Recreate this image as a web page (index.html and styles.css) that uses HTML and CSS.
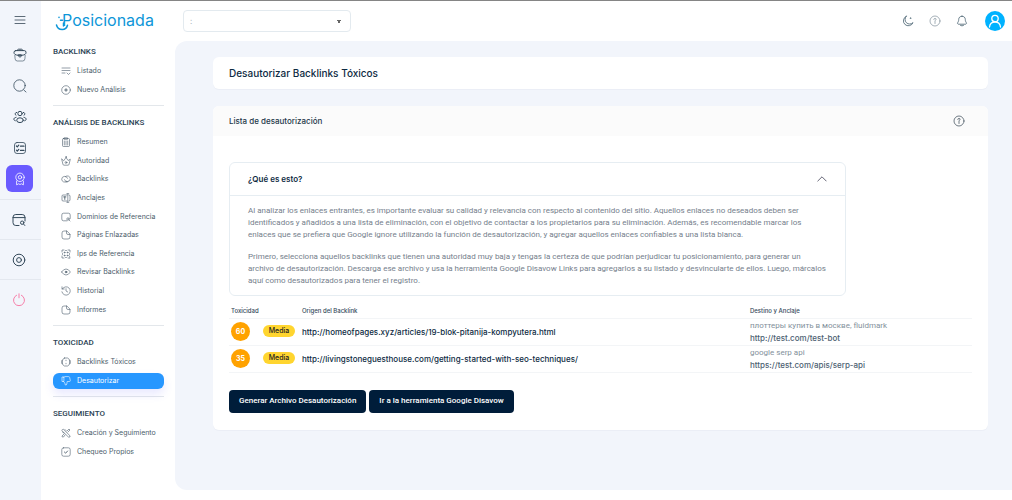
FILE: index.html
```html
<!DOCTYPE html>
<html lang="es">
<head>
<meta charset="utf-8">
<meta name="viewport" content="width=device-width, initial-scale=1">
<title>Posicionada - Desautorizar Backlinks</title>
<link rel="stylesheet" href="styles.css">
</head>
<body>
<div class="app">
  <nav class="rail" aria-label="Principal">
    <button class="rail-btn menu-btn" aria-label="Menú"><svg viewBox="0 0 14 14"><path d="M2 3.5h10M2 7h10M2 10.500h10"/></svg></button>
    <a class="rail-btn" href="#" aria-label="Proyectos"><svg viewBox="0 0 14 14"><path d="M4.200 2.600Q4.500 1.200 5.500 1.200h3q1 0 1.300 1.400M2.600 2.600h8.800q1.600 0 1.600 1.900Q13 7 8.600 7.300H5.400Q1 7 1 4.500 1 2.600 2.600 2.600z"/><path class="fine" d="M1.800 7.200l.3 3.600q.2 2.200 2.200 2.200h5.400q2 0 2.200-2.200l.3-3.600"/><path d="M5.600 6.800h2.800v1.400L7 9.200l-1.400-1z"/></svg></a>
    <a class="rail-btn" href="#" aria-label="Buscar"><svg class="thin" viewBox="0 0 14 14"><circle cx="6.500" cy="6.500" r="5.700"/><path d="M10.800 11l2.200 2"/></svg></a>
    <a class="rail-btn" href="#" aria-label="Usuarios"><svg viewBox="0 0 14 14"><circle cx="7" cy="3.500" r="2.200"/><ellipse cx="7" cy="10.200" rx="3.300" ry="2.400"/><path d="M3.600 2.400a1.600 1.600 0 0 0-.6 3M10.400 2.400a1.600 1.600 0 0 1 .6 3M3 7.400C.2 7.400.2 10.600 2.300 10.800M11 7.400c2.800 0 2.800 3.200.7 3.400"/></svg></a>
    <a class="rail-btn" href="#" aria-label="Tareas"><svg class="thin" viewBox="0 0 14 14"><rect x="1.500" y="1.500" width="11" height="11" rx="2.500"/><path class="bold" d="M3.400 5l.9.900 1.500-1.700M3.400 9.200l.9.900 1.500-1.700M7.500 5.200H11M7.500 9.400H11"/></svg></a>
    <a class="rail-btn active" href="#" aria-label="Backlinks"><svg viewBox="0 0 14 14"><circle cx="7" cy="5.300" r="4.200"/><circle cx="7" cy="5.300" r="1.700"/><path d="M3.600 9v3.800l2-1 1.400.7 1.400-.7 2 1V9"/></svg></a>
    <a class="rail-btn lined" href="#" aria-label="Auditoría"><svg viewBox="0 0 14 14"><path d="M7 12.500H3.800Q1 12.500 1 9.700V4.300Q1 1.500 3.800 1.500h6.400Q13 1.500 13 4.300V8M1 4.600h12"/><circle cx="10.200" cy="9.700" r="1.700"/><path d="M11.500 11l1.300 1.500"/></svg></a>
    <a class="rail-btn lined" href="#" aria-label="Ajustes"><svg viewBox="0 0 14 14"><circle cx="7" cy="7" r="5.800"/><circle cx="7" cy="7" r="2.400"/></svg></a>
    <a class="rail-btn lined power" href="#" aria-label="Salir"><svg viewBox="0 0 14 14"><path d="M4.600 2.200a5.500 5.500 0 1 0 4.800 0M7 .8v4"/></svg></a>
  </nav>

  <aside class="sidebar">
    <a class="logo" href="#" aria-label="Posicionada">
      <svg class="smile" viewBox="0 0 16 20"><path d="M1.500 13q1 4.500 5.700 4.500 4.300-.2 5.300-4.300M8.500 11v3"/><path d="M4 5.200v.2M5.500 8.200h2"/></svg>
      <span>Posicionada</span>
    </a>
    <section class="group">
      <h2>BACKLINKS</h2>
      <ul>
        <li><a href="#"><svg viewBox="0 0 10 10"><path d="M1 2h8M1 4.500h8M1 7h3M6 7l1.500 1.500L9 7"/></svg>Listado</a></li>
        <li><a href="#"><svg viewBox="0 0 10 10"><circle cx="5" cy="5" r="4.300"/><path class="bold" d="M5 3.700v2.600M3.700 5h2.600"/></svg>Nuevo Análisis</a></li>
      </ul>
    </section>
    <section class="group">
      <h2>ANÁLISIS DE BACKLINKS</h2>
      <ul class="long">
        <li><a href="#"><svg viewBox="0 0 10 10"><rect x="1.500" y="1.500" width="7" height="8" rx="1"/><path d="M3.500.8h3v1.500h-3zM3.300 4v4M5 4v4M6.700 4v4"/></svg>Resumen</a></li>
        <li><a href="#"><svg viewBox="0 0 10 10"><path d="M.7 3.200l1.200 5q.2 1 1 1h4.200q.8 0 1-1l1.200-5-2.200 1.300L5 1.500 2.900 4.500z"/><circle cx="5" cy="6.500" r=".9"/><circle cx="5" cy="1" r=".4"/></svg>Autoridad</a></li>
        <li><a href="#"><svg viewBox="0 0 10 10"><path d="M5.500 7.500A3 3 0 0 1 .7 5.200 3 3 0 0 1 6.500 4.300M4.500 2.500a3 3 0 0 1 4.800 2.300 3 3 0 0 1-5.800.9M5 8.100c1 .2 2-.4 2.300-1"/></svg>Backlinks</a></li>
        <li><a href="#"><svg viewBox="0 0 10 10"><path d="M6 8H2Q1 8 1 7V3q0-1 1-1h4M8 2q1 0 1 1v4q0 1-1 1M6.800.7v8.600M5.800.7h2M5.800 9.300h2"/><path class="bold" d="M2.700 3.900h2.200M3.800 3.900v2.500"/></svg>Anclajes</a></li>
        <li><a href="#"><svg viewBox="0 0 10 10"><path d="M6 8.800H2.500Q.8 8.800.8 7V3q0-1.800 1.700-1.800h5Q9.200 1.200 9.200 3v3.500"/><circle cx="7" cy="7" r="1.200"/><path d="M8 8l1 1"/></svg>Dominios de Referencia</a></li>
        <li><a href="#"><svg viewBox="0 0 10 10"><path d="M5.500 1H3Q1 1 1 3v4q0 2 2 2h4q2 0 2-2V4.500zM5.500 1v2q0 1.500 1.500 1.500h2"/></svg>Páginas Enlazadas</a></li>
        <li><a href="#"><svg viewBox="0 0 10 10"><path d="M1 3V1h2M7 1h2v2M1 7v2h2M7 9l2 .2L8.500 7M4.500 1.500h1M1.500 4.500v1M8.500 4.500v1M4.500 8.500h1"/><circle cx="3.500" cy="3.500" r=".5"/><circle cx="6.500" cy="3.500" r=".5"/><circle cx="3.500" cy="6.500" r=".5"/><circle cx="6.500" cy="6.500" r=".5"/></svg>Ips de Referencia</a></li>
        <li><a href="#"><svg viewBox="0 0 10 10"><path d="M.6 5Q2.500 2 5 2t4.400 3Q7.500 8 5 8T.6 5z"/><circle class="bold" cx="5" cy="5" r=".8"/></svg>Revisar Backlinks</a></li>
        <li><a href="#"><svg viewBox="0 0 10 10"><path d="M1.300 3A4.200 4.200 0 1 1 .9 5.800M1 .8V3h2.200M5 2.700V5l1.700 1"/></svg>Historial</a></li>
        <li><a href="#"><svg viewBox="0 0 10 10"><path d="M5.500 1H3Q1 1 1 3v4q0 2 2 2h4q2 0 2-2V4.500zM5.500 1v2q0 1.500 1.500 1.500h2"/></svg>Informes</a></li>
      </ul>
    </section>
    <section class="group">
      <h2>TOXICIDAD</h2>
      <ul>
        <li><a href="#"><svg viewBox="0 0 10 10"><path d="M3.500 1h3q2.300.5 2.300 4T6.500 9h-3Q1.200 8.500 1.200 5T3.500 1zM.8 3.500v3M9.200 3.500v3M5 3.200v.5M5 6.300v.5"/></svg>Backlinks Tóxicos</a></li>
        <li><a class="current" href="#" aria-current="page"><svg viewBox="0 0 10 10"><path d="M2.500 1H1v4.500h1.500zM2.500 1.300L4 .6h3.500q1 0 1.200 1L9.300 4.500q.1 1-1 1H6.200L5.800 8q-.3 1.400-1.500 1L3.800 7 2.500 5.500"/></svg>Desautorizar</a></li>
      </ul>
    </section>
    <section class="group">
      <h2>SEGUIMIENTO</h2>
      <ul>
        <li><a href="#"><svg viewBox="0 0 10 10"><path d="M1 2.200L2.200 1 9 7.800V9H7.800zM6 3l2-2 1 1-2 2M3 6L1 8l.3 1L2.500 9 4 7M4 1.500L5 2.500M1.500 4L3 5"/></svg>Creación y Seguimiento</a></li>
        <li><a href="#"><svg viewBox="0 0 10 10"><rect x=".8" y=".8" width="8.400" height="8.400" rx="1.800"/><path class="bold" d="M3.400 5l1.200 1.200 2-2.200"/></svg>Chequeo Propios</a></li>
      </ul>
    </section>
  </aside>

  <div class="content">
    <header class="topbar">
      <select class="project" aria-label="Proyecto"><option>:</option></select>
      <div class="tools">
        <button aria-label="Modo oscuro"><svg viewBox="0 0 12 12"><path d="M4.300 1.200A5 5 0 1 0 11 7.600 4.200 4.200 0 0 1 4.300 1.200z"/><path d="M8.300 3.500l.3-.9.300.9"/></svg></button>
        <button class="pale" aria-label="Ayuda"><svg viewBox="0 0 12 12"><circle cx="6" cy="6" r="5"/><path class="bold" d="M4.800 4.500Q5 3.300 6 3.300t1.100 1Q7.100 5 6 5.600V8.500"/></svg></button>
        <button aria-label="Notificaciones"><svg viewBox="0 0 12 12"><path d="M6 1.200c-2 0-3.300 1.400-3.300 3.300 0 1.600-.5 2.300-1 3.200-.4.800 0 1.500.8 1.500h7c.8 0 1.200-.7.8-1.500-.5-.9-1-1.600-1-3.200C9.300 2.600 8 1.200 6 1.200zM4.500 10.500q1.500.9 3 0"/></svg></button>
        <button class="avatar" aria-label="Cuenta"><svg viewBox="0 0 20 20"><circle cx="10" cy="7.500" r="3.200"/><path d="M4.500 16q.5-5 5.500-5t5.500 5"/></svg></button>
      </div>
    </header>

    <main class="main">
      <div class="card title-card"><h1>Desautorizar Backlinks Tóxicos</h1></div>
      <section class="card">
        <div class="card-head">
          <h2>Lista de desautorización</h2>
          <button class="help" aria-label="Ayuda"><svg viewBox="0 0 12 12"><circle cx="6" cy="6" r="5"/><path class="bold" d="M4.800 4.500Q5 3.300 6 3.300t1.100 1Q7.100 5 6 5.600V8.500"/></svg></button>
        </div>
        <div class="card-body">
          <div class="accordion">
            <button class="accordion-head" aria-expanded="true">¿Qué es esto?<svg viewBox="0 0 10 10"><path d="M.8 7L5 2.800 9.200 7"/></svg></button>
            <div class="accordion-body">
              <p>Al analizar los enlaces entrantes, es importante evaluar su calidad y relevancia con respecto al contenido del sitio. Aquellos enlaces no deseados deben ser<br>identificados y añadidos a una lista de eliminación, con el objetivo de contactar a los propietarios para su eliminación. Además, es recomendable marcar los<br>enlaces que se prefiera que Google ignore utilizando la función de desautorización, y agregar aquellos enlaces confiables a una lista blanca.</p>
              <p>Primero, selecciona aquellos backlinks que tienen una autoridad muy baja y tengas la certeza de que podrían perjudicar tu posicionamiento, para generar un<br>archivo de desautorización. Descarga ese archivo y usa la herramienta Google Disavow Links para agregarlos a su listado y desvincularte de ellos. Luego, márcalos<br>aquí como desautorizados para tener el registro.</p>
            </div>
          </div>
          <table>
            <thead><tr><th class="c-score">Toxicidad</th><th class="c-level"></th><th class="c-origin">Origen del Backlink</th><th>Destino y Anclaje</th></tr></thead>
            <tbody>
              <tr><td><span class="score">60</span></td><td><span class="badge">Media</span></td><td class="origin">http://homeofpages.xyz/articles/19-blok-pitanija-kompyutera.html</td><td class="target">плоттеры купить в москве, fluidmark<b>http://test.com/test-bot</b></td></tr>
              <tr><td><span class="score">35</span></td><td><span class="badge">Media</span></td><td class="origin">http://livingstoneguesthouse.com/getting-started-with-seo-techniques/</td><td class="target">google serp api<b>https://test.com/apis/serp-api</b></td></tr>
            </tbody>
          </table>
          <div class="actions">
            <button>Generar Archivo Desautorización</button>
            <button>Ir a la herramienta Google Disavow</button>
          </div>
        </div>
      </section>
    </main>
  </div>
</div>
</body>
</html>
```

FILE: styles.css
```css
* { box-sizing: border-box; }
body { margin: 0; background: #fff; color: #0d2a42; font: 400 8px/12px Inter, "Noto Sans", sans-serif; }
h1, h2, p, ul { margin: 0; padding: 0; }
ul { list-style: none; }
a { color: inherit; text-decoration: none; }
button { margin: 0; padding: 0; border: 0; background: none; color: inherit; font: inherit; cursor: pointer; }
svg { display: block; flex: none; fill: none; stroke: currentColor; stroke-width: 1; stroke-linecap: round; stroke-linejoin: round; }

.app { display: flex; min-height: 100vh; border-top: 1px solid #858585; }

/* Icon rail */
.rail { flex: none; width: 41px; padding: 5px 0; background: #f2f5fb; color: #34495a; display: flex; flex-direction: column; align-items: flex-start; }
.rail-btn { width: 27px; height: 27px; margin: 2px 0 2px 6px; border-radius: 6px; display: grid; place-items: center; }
.rail-btn svg { width: 14px; height: 14px; }
.rail-btn .thin { stroke-width: .8; }
.rail-btn .fine { stroke-width: .6; }
.rail-btn .bold { stroke-width: 1.2; }
.menu-btn { margin: 0 0 6px 6px; color: #5d6b78; }
.rail-btn.active { background: #6a5bff; color: #fff; margin-bottom: 7px; }
.rail-btn.active svg { stroke-width: .8; }
.rail-btn.lined { width: 100%; height: 40px; margin: 0; padding-left: 12px; justify-items: start; border-top: 1px solid #e4e8ef; border-radius: 0; }
.rail-btn.power { color: #f77fa9; }

/* Sidebar */
.sidebar { flex: none; width: 134px; padding: 7px 11px 12px 12px; }
.logo { display: flex; align-items: center; height: 24px; margin: 0 0 15px 2px; color: #0d96d8; font-size: 16px; line-height: 24px; }
.logo .smile { width: 16px; height: 20px; margin: 3px -9px 0 0; stroke-width: 1.500; }
.group + .group { margin-top: 6px; padding-top: 12px; border-top: 1px solid #e3e7eb; }
.group h2 { margin-bottom: 5px; font: 500 8px/10px Roboto, sans-serif; color: #2b4354; }
.group ul { display: grid; grid-auto-rows: 1fr; min-height: 37px; }
.group .long { min-height: 186px; }
.group li { display: grid; padding: 1px 0; }
.group a { display: flex; align-items: center; gap: 6px; padding-left: 8px; border-radius: 6px; color: #4c5d6b; font-size: 7px; line-height: 10px; white-space: nowrap; }
.group a svg { width: 10px; height: 10px; stroke-width: .6; }
.group a .bold { stroke-width: .9; }
.group a.current { background: #2797ff; color: #fff; box-shadow: 0 5px 10px rgba(90, 90, 255, .14); }

/* Top bar */
.content { flex: 1; min-width: 0; display: flex; flex-direction: column; }
.topbar { height: 40px; padding: 0 7px 0 8px; display: flex; align-items: center; justify-content: space-between; }
.project { width: 168px; height: 22px; padding: 0 10px 0 6px; border: 1px solid #e3eaef; border-radius: 4px; color: #a7b0b8; font: inherit; appearance: none; background: linear-gradient(to top right, transparent 50%, #666 50%) right 11px center / 3px 3px no-repeat, linear-gradient(to top left, transparent 50%, #666 50%) right 8px center / 3px 3px no-repeat, #fff; }
.tools { display: flex; align-items: center; gap: 15px; color: #45606f; }
.tools svg { width: 12px; height: 12px; }
.tools .pale { color: #8e9ca6; }
.tools svg, .help svg { stroke-width: .8; }
.tools .avatar { width: 20px; height: 20px; margin-left: 2px; border-radius: 50%; background: #00b2ff; color: #fff; }
.tools .avatar svg { width: 20px; height: 20px; stroke-width: 1.300; }

/* Page */
.main { flex: 1; margin-bottom: 10px; padding: 16px 24px 16px 38px; background: #f2f5fb; border-radius: 12px 0 0 12px; }
.card { background: #fff; border-radius: 6px; overflow: hidden; box-shadow: 0 1px 1px rgba(20, 40, 80, .03); }
.title-card { margin-bottom: 17px; padding: 8px 16px; }
.title-card h1 { font-size: 10px; line-height: 16px; font-weight: 500; }
.card-head { display: flex; align-items: center; justify-content: space-between; padding: 9px 23px 9px 16px; background: #fbfbfb; }
.card-head h2 { font-size: 8px; line-height: 12px; font-weight: 500; color: #24384a; }
.help { color: #4d5a66; }
.help svg { width: 12px; height: 12px; }
.card-body { padding: 26px 16px 17px; }
.accordion { width: 83%; border: 1px solid #e6edf2; border-radius: 6px; }
.accordion-head { width: 100%; display: flex; align-items: center; justify-content: space-between; padding: 10px 18px; font-weight: 600; border-bottom: 1px solid #e6edf2; }
.accordion-head svg { width: 10px; height: 10px; stroke: #556; stroke-width: .9; }
.accordion-body { padding: 9px 18px 8px; color: #75808c; font-family: Roboto, sans-serif; white-space: nowrap; }
.accordion-body p + p { margin-top: 10px; }

table { width: 100%; margin-top: 8px; border-collapse: collapse; table-layout: fixed; }
th, td { padding: 0; text-align: left; border-bottom: 1px solid #f3f5f7; }
th { height: 14px; font-size: 6px; line-height: 10px; font-weight: 500; color: #34495a; }
th:first-child, td:first-child { padding-left: 2px; }
td { height: 27px; }
.c-score { width: 34px; }
.c-level { width: 39px; }
.c-origin { width: 448px; }
.score { display: grid; place-items: center; width: 19px; height: 19px; border-radius: 50%; background: #ffa200; color: #fff; font-size: 7px; font-weight: 700; }
.badge { display: block; width: 32px; margin-bottom: 2px; border-radius: 6px; background: #ffd52f; font-size: 7px; font-weight: 500; color: #222; text-align: center; }
.origin { font-weight: 500; }
.target { color: #83909b; font-family: Roboto, sans-serif; }
.target b { display: block; font-family: Inter, sans-serif; font-weight: 500; color: #4d6172; }
.actions { display: flex; gap: 3px; margin-top: 17px; }
.actions button { height: 23px; padding: 0 10px; border-radius: 4px; background: #001d3a; color: #fff; font-family: Roboto, sans-serif; font-weight: 500; }
```
